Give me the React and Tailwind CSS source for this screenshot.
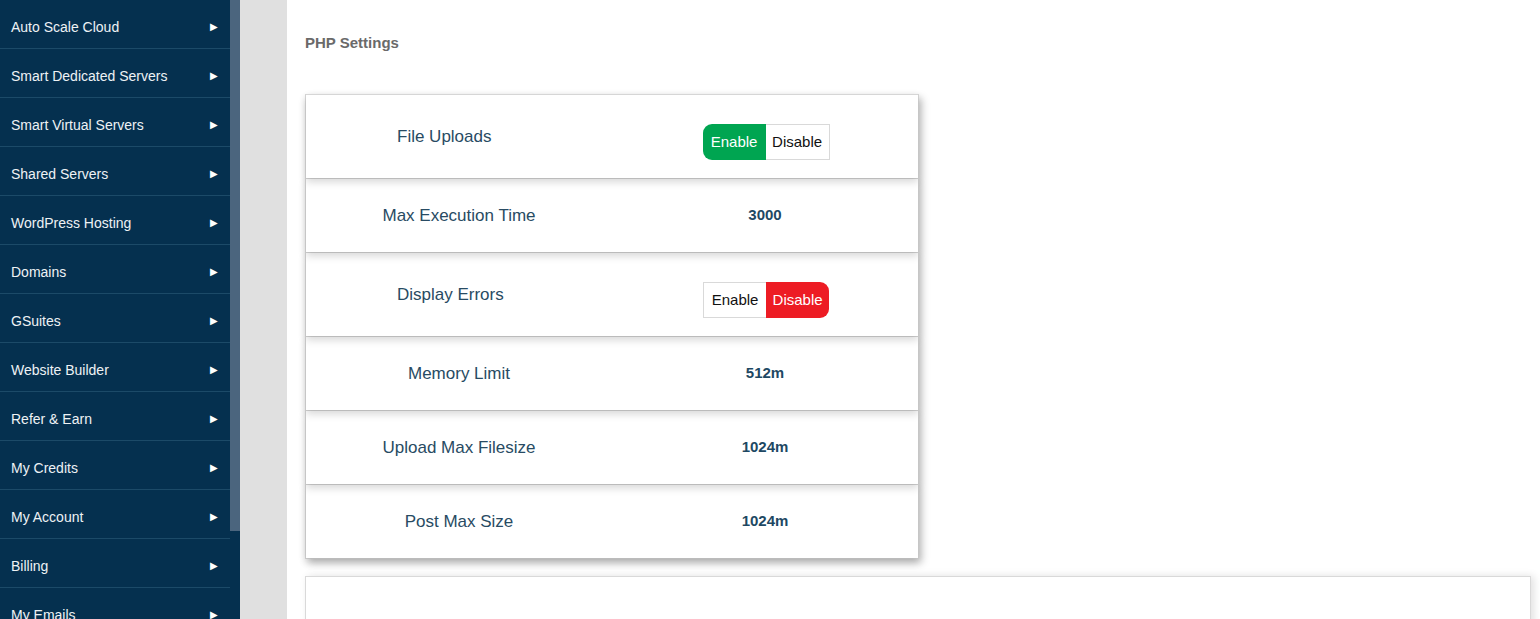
import React from "react";

const menu = [
  "Auto Scale Cloud",
  "Smart Dedicated Servers",
  "Smart Virtual Servers",
  "Shared Servers",
  "WordPress Hosting",
  "Domains",
  "GSuites",
  "Website Builder",
  "Refer & Earn",
  "My Credits",
  "My Account",
  "Billing",
  "My Emails",
];

function Toggle({ enabled }) {
  return (
    <div className="flex h-[36px] text-[15px] leading-none">
      <div
        className={
          enabled
            ? "flex items-center justify-center w-[63px] bg-[#00a551] text-white rounded-l-[9px]"
            : "flex items-center justify-center w-[63px] bg-white text-[#111] border-y border-l border-[#d9d9d9]"
        }
      >
        Enable
      </div>
      <div
        className={
          enabled
            ? "flex items-center justify-center w-[64px] bg-white text-[#111] border-y border-r border-[#d9d9d9]"
            : "flex items-center justify-center w-[63px] bg-[#ed1c24] text-white rounded-r-[9px]"
        }
      >
        Disable
      </div>
    </div>
  );
}

function Row({ label, value, toggle, enabled, z }) {
  if (toggle) {
    return (
      <div className={"flex h-[84px] bg-white border-t border-[#d6d6d6] shadow-[0_4px_8px_rgba(0,0,0,0.16)] relative " + z}>
        <div className="w-[307px] flex items-center pl-[91px] text-[17px] text-[#284b63]">{label}</div>
        <div className="w-[307px] flex items-center justify-center pt-[10px] pl-[2px]">
          <Toggle enabled={enabled} />
        </div>
      </div>
    );
  }
  return (
    <div className={"flex h-[74px] bg-white border-t border-[#d6d6d6] shadow-[0_4px_8px_rgba(0,0,0,0.16)] relative " + z}>
      <div className="w-[307px] flex items-center justify-center text-[17px] text-[#284b63]">{label}</div>
      <div className="w-[307px] flex items-center justify-center text-[15px] font-bold text-[#1e4863]">{value}</div>
    </div>
  );
}

export default function App() {
  return (
    <div className="flex h-[619px] w-[1540px] overflow-hidden bg-white" style={{ fontFamily: '"Liberation Sans", Arial, sans-serif' }}>
      <div className="flex w-[240px] shrink-0 bg-[#05304f]">
        <div className="w-[230px]">
          {menu.map((m) => (
            <div key={m} className="flex items-start justify-between h-[49px] border-b border-[#1c4a68] pt-[17px] pl-[11px] pr-[12px]">
              <span className="text-[14px] leading-[20px] text-[#eef2f5]">{m}</span>
              <span className="text-[10px] leading-[20px] text-white">▶</span>
            </div>
          ))}
        </div>
        <div className="w-[10px]">
          <div className="h-[531px] bg-[#4b657e]"></div>
        </div>
      </div>
      <div className="w-[47px] shrink-0 bg-[#e0e0e0]"></div>
      <div className="flex-1 pl-[18px] pr-[9px]">
        <div className="h-[94px] pt-[34px] text-[15px] leading-[18px] font-bold text-[#6a6a6a]">PHP Settings</div>
        <div className="w-[614px] flex flex-col border-x border-b border-[#d6d6d6] shadow-[3px_4px_8px_rgba(0,0,0,0.22)] relative">
          <Row label="File Uploads" toggle enabled z="z-[6]" />
          <Row label="Max Execution Time" value="3000" z="z-[5]" />
          <Row label="Display Errors" toggle enabled={false} z="z-[4]" />
          <Row label="Memory Limit" value="512m" z="z-[3]" />
          <Row label="Upload Max Filesize" value="1024m" z="z-[2]" />
          <Row label="Post Max Size" value="1024m" z="z-[1]" />
        </div>
        <div className="mt-[17px] h-[200px] border border-[#d9d9d9] bg-white shadow-[3px_0_8px_rgba(0,0,0,0.12)]"></div>
      </div>
    </div>
  );
}
